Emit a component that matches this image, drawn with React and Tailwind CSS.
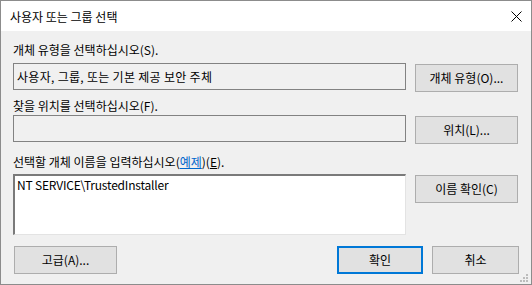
import React from "react";

const font = { fontFamily: '"Noto Sans CJK KR", "Noto Sans", sans-serif' };

function Btn({ children, primary = false, className = "" }) {
  return (
    <div
      className={
        "h-[28px] flex items-center justify-center bg-[#e1e1e1] text-[12px] leading-[14px] text-black " +
        (primary ? "border-2 border-[#0078d7] " : "border border-[#adadad] ") +
        className
      }
    >
      {children}
    </div>
  );
}

export default function App() {
  return (
    <div
      style={font}
      className="w-[532px] h-[285px] border border-[#8c8c8c] flex flex-col bg-[#f0f0f0] text-black relative overflow-hidden"
    >
      {/* Title bar */}
      <div className="h-[30px] bg-white flex items-center justify-between pl-[9px] pr-[9px] shrink-0">
        <span className="text-[12px] leading-[14px] mt-[1px]">사용자 또는 그룹 선택</span>
        <svg width="11" height="11" viewBox="0 0 11 11" className="mt-[1px]">
          <path d="M0.5 0.5 L10.5 10.5 M10.5 0.5 L0.5 10.5" stroke="#000" strokeWidth="1" fill="none" />
        </svg>
      </div>

      {/* Body */}
      <div className="flex-1 flex flex-col px-[12px]">
        <div className="mt-[12px] h-[14px] text-[12px] leading-[14px]">개체 유형을 선택하십시오(S).</div>
        <div className="mt-[6px] flex items-start gap-[9px]">
          <div className="w-[393px] h-[27px] border border-[#828282] bg-[#f0f0f0] flex items-center pl-[3px] text-[12px] leading-[14px] tracking-[0.3px]">
            사용자, 그룹, 또는 기본 제공 보안 주체
          </div>
          <Btn className="w-[103px] mt-[1px]">개체 유형(O)...</Btn>
        </div>

        <div className="mt-[7px] h-[14px] text-[12px] leading-[14px]">찾을 위치를 선택하십시오(F).</div>
        <div className="mt-[2px] flex items-start gap-[9px]">
          <div className="w-[393px] h-[27px] border border-[#828282] bg-[#f0f0f0]" />
          <Btn className="w-[103px] mt-[1px]">위치(L)...</Btn>
        </div>

        <div className="mt-[11px] h-[14px] text-[12px] leading-[14px]">
          선택할 개체 이름을 입력하십시오(
          <span className="text-[#0066cc] underline">예제</span>)(<span className="underline">E</span>).
        </div>
        <div className="mt-[5px] flex items-start gap-[9px]">
          <div className="w-[393px] h-[61px] bg-white border-t-2 border-l-2 border-b border-r border-t-[#7a7a7a] border-l-[#7a7a7a] border-b-[#e3e3e3] border-r-[#e3e3e3] pl-[2px] pt-[2px] text-[12px] leading-[14px] tracking-[-0.2px]">
            NT SERVICE\TrustedInstaller
          </div>
          <Btn className="w-[103px] mt-[1px]">이름 확인(C)</Btn>
        </div>

        <div className="mt-[11px] flex items-start">
          <Btn className="w-[103px] ml-[1px]">고급(A)...</Btn>
          <div className="flex-1" />
          <Btn primary className="w-[86px]">확인</Btn>
          <Btn className="w-[87px] ml-[9px]">취소</Btn>
        </div>
      </div>

      {/* resize gripper */}
      <svg width="9" height="9" viewBox="0 0 9 9" className="absolute right-[2px] bottom-[1px]">
        <rect x="6" y="0" width="2" height="2" fill="#bcbcbc" />
        <rect x="3" y="3" width="2" height="2" fill="#bcbcbc" />
        <rect x="6" y="3" width="2" height="2" fill="#bcbcbc" />
        <rect x="0" y="6" width="2" height="2" fill="#bcbcbc" />
        <rect x="3" y="6" width="2" height="2" fill="#bcbcbc" />
        <rect x="6" y="6" width="2" height="2" fill="#bcbcbc" />
      </svg>
    </div>
  );
}
